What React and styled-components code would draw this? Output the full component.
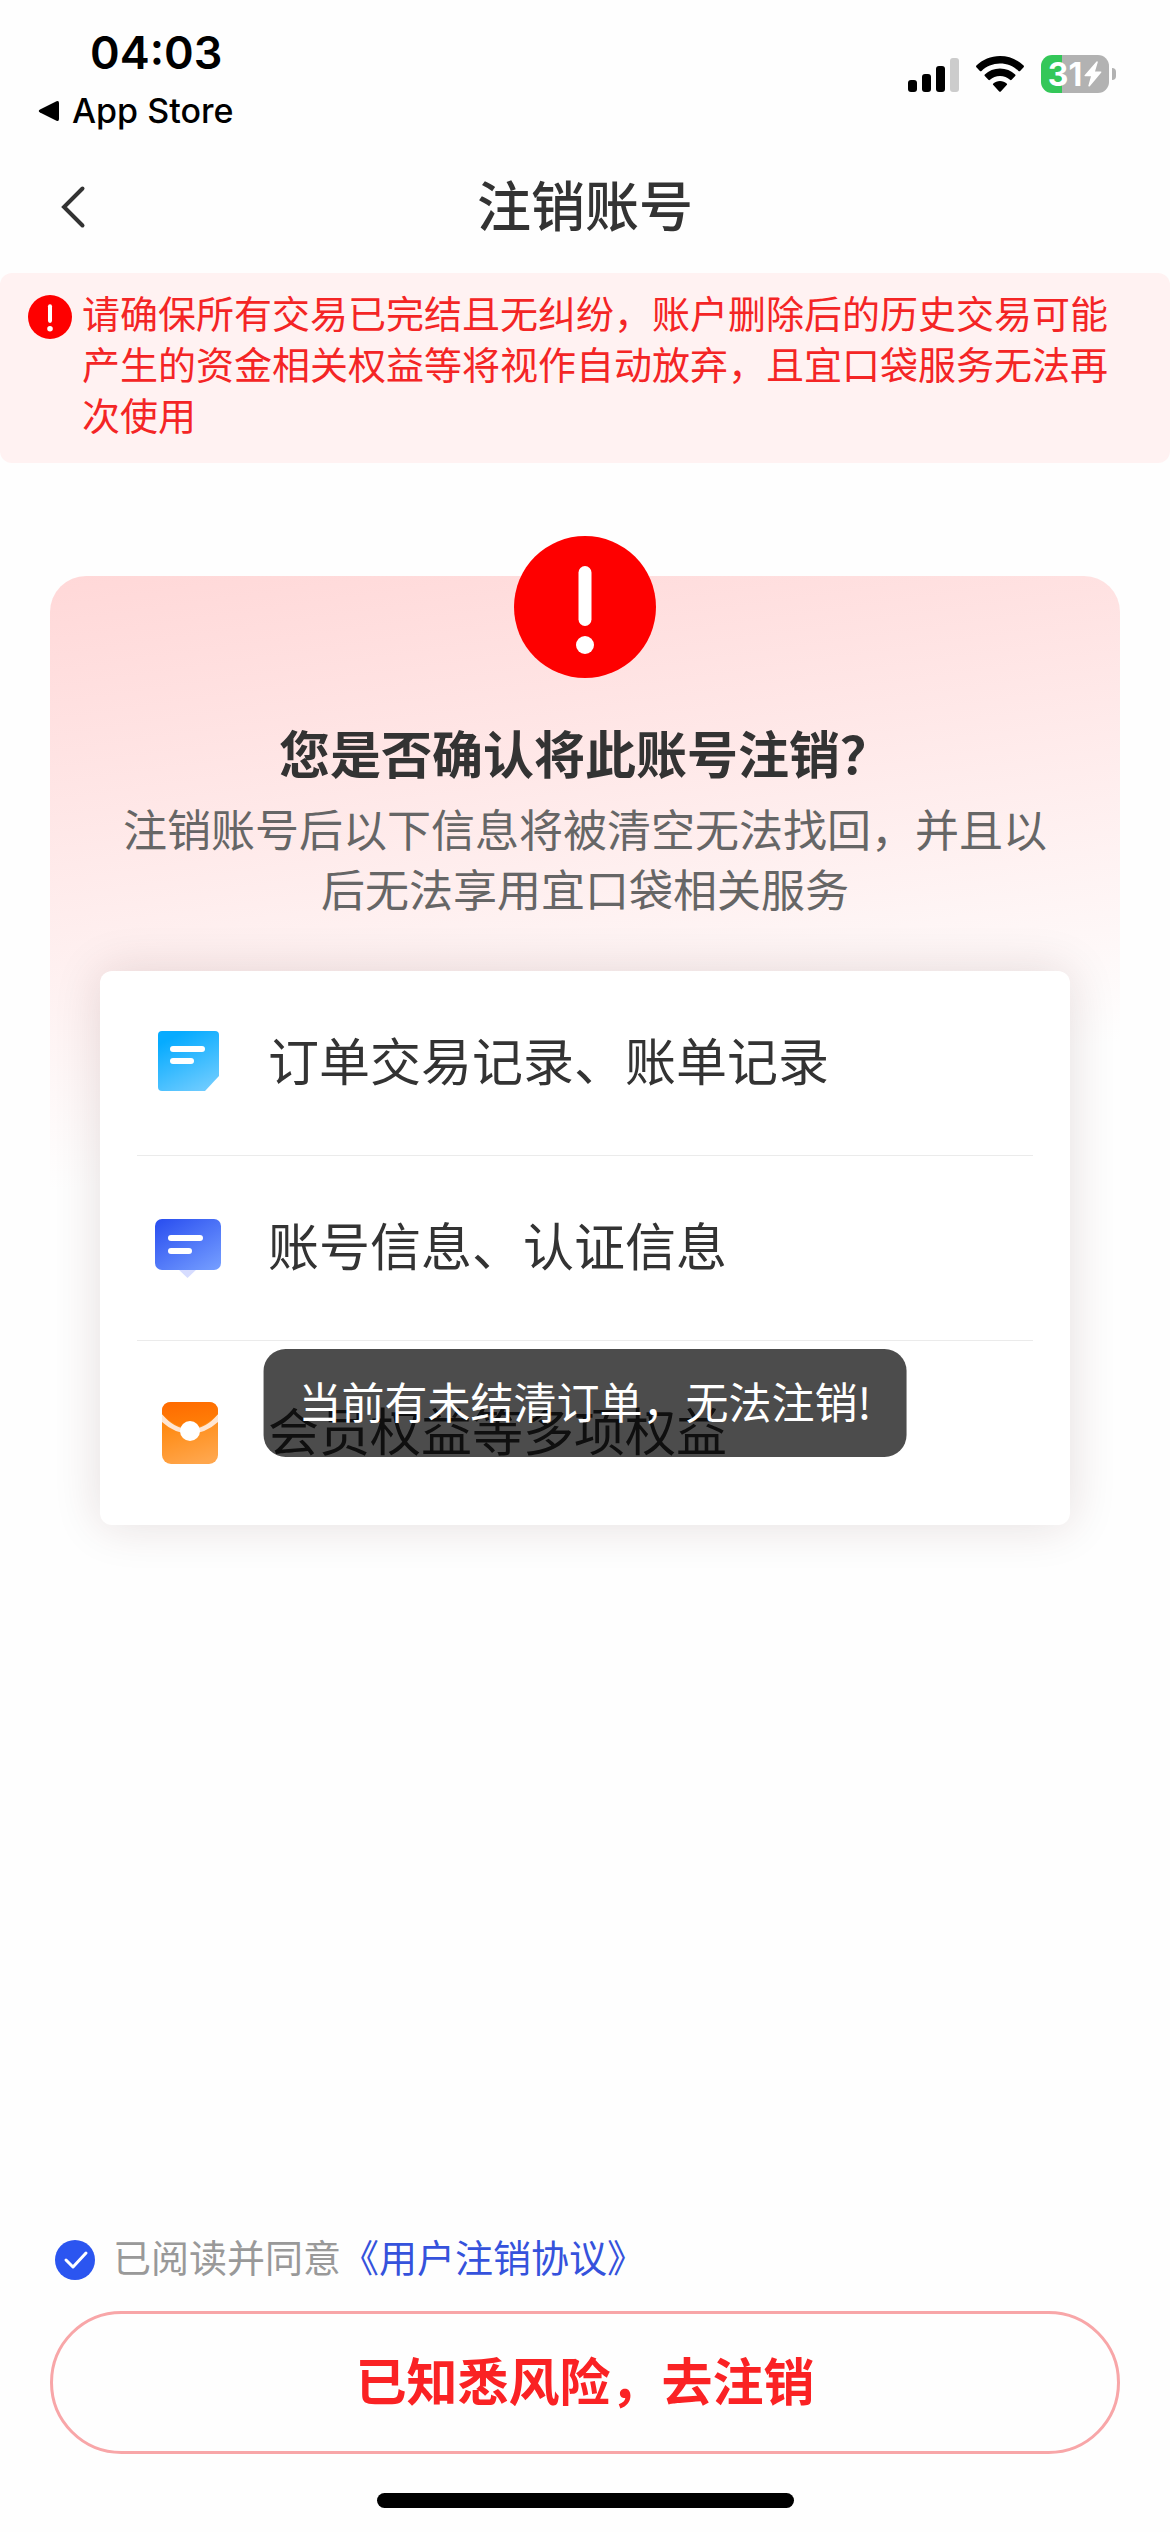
import { useState } from "react";
import styled, { createGlobalStyle } from "styled-components";

const GlobalStyle = createGlobalStyle`
  * {
    box-sizing: border-box;
  }
  body {
    margin: 0;
    background: #fefefe;
    font-family: "Noto Sans CJK SC", "Liberation Sans", sans-serif;
    color: #333;
  }
  h1, h2, p, ul {
    margin: 0;
    padding: 0;
  }
`;

const RECORDS = [
  { id: "order", text: "订单交易记录、账单记录", Icon: OrderIcon },
  { id: "account", text: "账号信息、认证信息", Icon: AccountIcon },
  { id: "member", text: "会员权益等多项权益", Icon: MemberIcon },
];

const App = () => {
  const [agreed, setAgreed] = useState(true);

  return (
    <Page>
      <GlobalStyle />
      <StatusBar>
        <StatusLeft>
          <Time>04:03</Time>
          <BackToApp href="#">
            <svg width="22" height="22" viewBox="0 0 22 22">
              <path
                d="M2 9.5 18.5 1.3Q21 .3 21 3v16q0 2.700-2.500 1.700L2 12.500Q-.5 11 2 9.500Z"
                fill="#000"
              />
            </svg>
            App Store
          </BackToApp>
        </StatusLeft>
        <StatusRight>
          <SignalIcon />
          <WifiIcon />
          <Battery>
            <BatteryBody>
              31
              <svg width="18" height="26" viewBox="0 0 18 26">
                <path
                  d="M12.500 .5 .6 14.200q-.6 1 .6 1H7L4.300 24.800q.2 1.200 1.500.4L17.300 11.500q.6-1-.6-1H11L13.800 1.200q0-1.200-1.300-.7Z"
                  fill="#fff"
                />
              </svg>
            </BatteryBody>
            <BatteryCap />
          </Battery>
        </StatusRight>
      </StatusBar>

      <NavBar>
        <BackButton type="button" aria-label="返回">
          <svg width="26" height="44" viewBox="0 0 26 44">
            <path
              d="M22.500 3.500 4 22l18.500 18.500"
              fill="none"
              stroke="#333"
              strokeWidth="4"
              strokeLinecap="round"
            />
          </svg>
        </BackButton>
        <NavTitle>注销账号</NavTitle>
      </NavBar>

      <Notice>
        <WarnIcon size={44} />
        <NoticeText>
          请确保所有交易已完结且无纠纷，账户删除后的历史交易可能产生的资金相关权益等将视作自动放弃，且宜口袋服务无法再次使用
        </NoticeText>
      </Notice>

      <Panel>
        <WarnIcon size={142} />
        <PanelTitle>您是否确认将此账号注销？</PanelTitle>
        <PanelText>
          注销账号后以下信息将被清空无法找回，并且以后无法享用宜口袋相关服务
        </PanelText>
        <RecordList>
          {RECORDS.map(({ id, text, Icon }) => (
            <RecordItem key={id}>
              <Icon />
              <RecordText>{text}</RecordText>
            </RecordItem>
          ))}
        </RecordList>
      </Panel>

      <Footer>
        <Agreement>
          <AgreeLabel>
            <Checkbox
              type="checkbox"
              checked={agreed}
              onChange={(e) => setAgreed(e.target.checked)}
            />
            <AgreeText>已阅读并同意</AgreeText>
          </AgreeLabel>
          <AgreeLink href="#">《用户注销协议》</AgreeLink>
        </Agreement>
        <SubmitButton type="button">已知悉风险，去注销</SubmitButton>
        <HomeIndicator />
      </Footer>

      <Toast role="status">当前有未结清订单，无法注销!</Toast>
    </Page>
  );
};

export default App;

function SignalIcon() {
  return (
    <svg width="51" height="36" viewBox="0 0 51 36">
      <rect x="0" y="24" width="9" height="12" rx="3" />
      <rect x="14" y="18" width="9" height="18" rx="3" />
      <rect x="28" y="10" width="9" height="26" rx="3" />
      <rect x="42" y="2" width="9" height="34" rx="3" fill="#ccc" />
    </svg>
  );
}

function WifiIcon() {
  return (
    <svg width="48" height="36" viewBox="0 0 48 36">
      <path d="M24 0C14.800 0 6.500 3.700.4 9.600q-.7.8 0 1.600l3.500 3.700q.8.7 1.600 0C10.300 10.300 16.800 7.500 24 7.500s13.700 2.800 18.500 7.400q.8.700 1.600 0l3.500-3.700q.7-.8 0-1.600C41.500 3.700 33.200 0 24 0Z" />
      <path d="M24 12.500c-5.900 0-11.200 2.300-15.200 6q-.8.8 0 1.600l3.600 3.700q.8.700 1.600 0c2.600-2.400 6.100-3.800 10-3.800s7.400 1.400 10 3.800q.8.700 1.600 0l3.600-3.700q.8-.8 0-1.600c-4-3.700-9.300-6-15.200-6Z" />
      <path d="M24 25c-2.600 0-4.900 1-6.700 2.500q-.8.800 0 1.600l5.900 6.300q.8.700 1.600 0l5.900-6.300q.8-.8 0-1.600C28.900 26 26.600 25 24 25Z" />
    </svg>
  );
}

function WarnIcon({ size }) {
  return (
    <WarnSvg width={size} height={size} viewBox="0 0 142 142">
      <circle cx="71" cy="71" r="71" fill="#fe0000" />
      <rect x="64.500" y="30" width="13" height="60" rx="6.500" fill="#fff" />
      <circle cx="71" cy="109" r="9" fill="#fff" />
    </WarnSvg>
  );
}

function OrderIcon() {
  return (
    <svg width="66" height="66" viewBox="0 0 66 66">
      <defs>
        <linearGradient id="order" x1="0.2" y1="0" x2="0.7" y2="1">
          <stop offset="0.100" stopColor="#06abff" />
          <stop offset="1" stopColor="#6ccbff" />
        </linearGradient>
      </defs>
      <path
        d="M7 1h53q4 0 4 4v41L50 61H7q-4 0-4-4V5q0-4 4-4Z"
        fill="url(#order)"
      />
      <rect x="15" y="16" width="35" height="6" rx="3" fill="#fff" />
      <rect x="15" y="28" width="24" height="6" rx="3" fill="#fff" />
    </svg>
  );
}

function AccountIcon() {
  return (
    <svg width="66" height="66" viewBox="0 0 66 66">
      <defs>
        <linearGradient id="account" x1="0.100" y1="0" x2="0.900" y2="1">
          <stop offset="0" stopColor="#2b50f0" />
          <stop offset="1" stopColor="#739cff" />
        </linearGradient>
      </defs>
      <path d="M23 54h19l-9.500 9Z" fill="#d6dcff" />
      <rect x="0" y="4" width="66" height="51" rx="7" fill="url(#account)" />
      <rect x="13" y="20" width="35" height="6" rx="3" fill="#fff" />
      <rect x="13" y="33" width="24" height="6" rx="3" fill="#fff" />
    </svg>
  );
}

function MemberIcon() {
  return (
    <svg width="66" height="66" viewBox="0 0 66 66">
      <defs>
        <linearGradient id="member" x1="0.300" y1="0" x2="0.600" y2="1">
          <stop offset="0.300" stopColor="#ff8a12" />
          <stop offset="1" stopColor="#ffa64c" />
        </linearGradient>
        <linearGradient id="flap" x1="0" y1="0" x2="0.300" y2="1">
          <stop offset="0" stopColor="#ff6a00" />
          <stop offset="1" stopColor="#ff7f08" />
        </linearGradient>
      </defs>
      <rect x="7" y="2" width="56" height="62" rx="9" fill="url(#member)" />
      <path
        d="M7 14Q19 29 35 29.500 51 29 63 14V22Q51 33 35 34 19 33 7 22Z"
        fill="#ffe6d2"
      />
      <path
        d="M16 2h38q8 0 9 8v4Q50 28 35 28.500 20 28 7 14v-4q1-8 9-8Z"
        fill="url(#flap)"
      />
      <circle cx="35" cy="31" r="10" fill="#fff" />
    </svg>
  );
}

const Page = styled.div`
  position: relative;
  display: flex;
  flex-direction: column;
  min-height: 100vh;
`;

const StatusBar = styled.div`
  display: flex;
  justify-content: space-between;
  align-items: flex-start;
  padding: 26px 54px 0 38px;
  height: 150px;
  font-family: Inter, "Liberation Sans", sans-serif;
  color: #000;
`;

const StatusLeft = styled.div`
  display: flex;
  flex-direction: column;
  gap: 10px;
`;

const Time = styled.span`
  padding-left: 52px;
  font-size: 45px;
  font-weight: 600;
  line-height: 54px;
`;

const BackToApp = styled.a`
  display: flex;
  align-items: center;
  gap: 12px;
  font-size: 34px;
  font-weight: 500;
  line-height: 42px;
  color: inherit;
  text-decoration: none;
`;

const StatusRight = styled.div`
  display: flex;
  align-items: center;
  gap: 17px;
  padding-top: 29px;
`;

const Battery = styled.div`
  display: flex;
  align-items: center;
  gap: 3px;
`;

const BatteryBody = styled.div`
  display: flex;
  align-items: center;
  justify-content: center;
  gap: 2px;
  width: 68px;
  height: 38px;
  border-radius: 11px;
  background: linear-gradient(to right, #34c759 31%, #b2b2b2 31%);
  font-size: 32px;
  font-weight: 700;
  color: #fff;
`;

const BatteryCap = styled.span`
  width: 4px;
  height: 12px;
  border-radius: 0 6px 6px 0;
  background: #b2b2b2;
`;

const NavBar = styled.header`
  display: grid;
  grid-template-columns: 1fr auto 1fr;
  align-items: center;
  padding: 0 60px;
  height: 114px;
`;

const BackButton = styled.button`
  display: flex;
  justify-self: start;
  padding: 0;
  border: none;
  background: none;
  cursor: pointer;
`;

const NavTitle = styled.h1`
  padding-bottom: 6px;
  font-size: 54px;
  font-weight: 500;
  line-height: 60px;
`;

const Notice = styled.section`
  display: flex;
  align-items: flex-start;
  gap: 10px;
  margin-top: 9px;
  padding: 13px 56px 24px 28px;
  border-radius: 12px;
  background: #fff2f2;

  svg {
    margin-top: 9px;
  }
`;

const NoticeText = styled.p`
  flex: 1;
  font-size: 38px;
  line-height: 51px;
  color: #f42525;
`;

const WarnSvg = styled.svg`
  flex-shrink: 0;
  display: block;
`;

const Panel = styled.main`
  display: flex;
  flex-direction: column;
  align-items: center;
  margin: 113px 50px 0;
  padding: 0 50px;
  border-radius: 36px 36px 0 0;
  background: linear-gradient(172deg, #ffd8d8, #fefefe 610px);

  > svg {
    margin-top: -40px;
  }
`;

const PanelTitle = styled.h2`
  margin-top: 44px;
  font-size: 51px;
  font-weight: 700;
  line-height: 60px;
`;

const PanelText = styled.p`
  margin-top: 16px;
  padding: 0 16px;
  font-size: 44px;
  line-height: 60px;
  text-align: center;
  color: #666;
`;

const RecordList = styled.ul`
  align-self: stretch;
  margin-top: 53px;
  padding: 0 37px;
  border-radius: 12px;
  background: #fff;
  box-shadow: 0 0 48px rgba(70, 20, 20, 0.14);
  list-style: none;
`;

const RecordItem = styled.li`
  display: flex;
  align-items: center;
  gap: 47px;
  padding-left: 18px;
  height: 184px;

  & + & {
    height: 185px;
    border-top: 1px solid #ebebeb;
  }
`;

const RecordText = styled.span`
  padding-bottom: 8px;
  font-size: 51px;
  line-height: 60px;
`;

const Footer = styled.footer`
  display: flex;
  flex-direction: column;
  margin-top: auto;
  padding: 0 50px 24px;
`;

const Agreement = styled.div`
  display: flex;
  align-items: center;
  padding-left: 5px;
  font-size: 38px;
  line-height: 46px;
`;

const AgreeLabel = styled.label`
  display: flex;
  align-items: center;
  gap: 18px;
`;

const AgreeText = styled.span`
  padding-bottom: 8px;
  color: #999;
`;

const Checkbox = styled.input`
  appearance: none;
  width: 40px;
  height: 40px;
  margin: 0;
  border: 2px solid #bbb;
  border-radius: 50%;

  &:checked {
    border: none;
    background: #2b55f0
      url("data:image/svg+xml,%3Csvg xmlns='http://www.w3.org/2000/svg' viewBox='0 0 40 40'%3E%3Cpath d='M11 20l7 7L31 13' fill='none' stroke='white' stroke-width='3' stroke-linecap='round' stroke-linejoin='round'/%3E%3C/svg%3E");
  }
`;

const AgreeLink = styled.a`
  padding-bottom: 8px;
  color: #3552dc;
  text-decoration: none;
`;

const SubmitButton = styled.button`
  margin-top: 24px;
  padding: 0 0 8px;
  height: 143px;
  border: 3px solid #f8a6a8;
  border-radius: 72px;
  background: transparent;
  font-family: inherit;
  font-size: 51px;
  font-weight: 700;
  color: #fa2224;
  cursor: pointer;
`;

const HomeIndicator = styled.div`
  align-self: center;
  width: 39%;
  max-width: 417px;
  height: 15px;
  margin-top: 39px;
  border-radius: 8px;
  background: #000;
`;

/* floats over the record list */
const Toast = styled.div`
  position: absolute;
  top: 1349px;
  left: 50%;
  transform: translateX(-50%);
  padding: 21px 35px 27px;
  border-radius: 22px;
  background: rgba(0, 0, 0, 0.7);
  font-size: 43px;
  line-height: 60px;
  white-space: nowrap;
  color: #fff;
`;
